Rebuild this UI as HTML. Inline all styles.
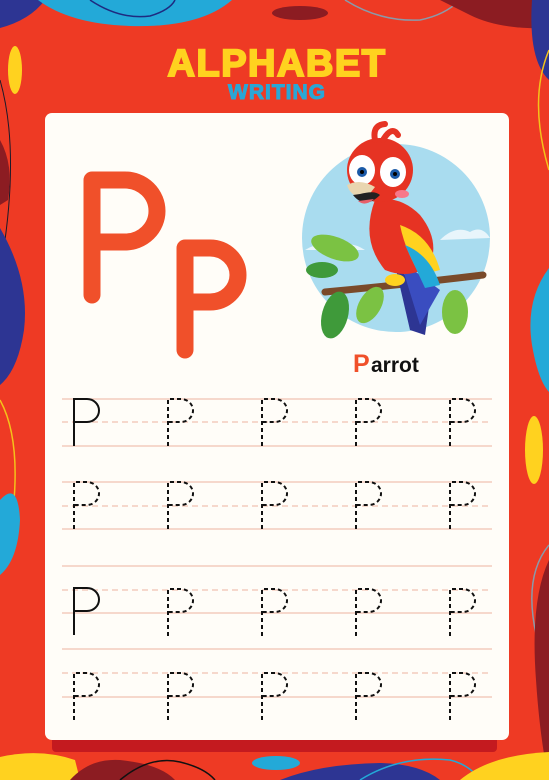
<!DOCTYPE html>
<html><head><meta charset="utf-8"><style>
html,body{margin:0;padding:0;}
body{width:549px;height:780px;overflow:hidden;background:#ee3a24;position:relative;font-family:"Liberation Sans",sans-serif;}
svg{position:absolute;left:0;top:0;}
</style></head><body>
<svg width="549" height="780" viewBox="0 0 549 780" xmlns="http://www.w3.org/2000/svg">
<rect width="549" height="780" fill="#ee3a24"/>
<path d="M0,0 H45 Q30,20 0,28 Z" fill="#2d3593"/>
<path d="M38,0 H232 Q200,28 130,26 Q70,24 38,0 Z" fill="#23a9d8"/>
<path d="M90,0 Q120,20 150,16 Q170,10 175,0" fill="none" stroke="#1e2a80" stroke-width="1.5"/>
<ellipse cx="300" cy="13" rx="28" ry="7" fill="#8c1c22"/>
<path d="M345,0 Q380,22 420,20 Q445,15 460,0" fill="none" stroke="#8a9aaa" stroke-width="1.5"/>
<path d="M440,0 H549 V28 Q500,30 470,15 Z" fill="#8c1c22"/>
<path d="M532,0 H549 V80 Q528,60 532,0 Z" fill="#2d3593"/>
<path d="M549,50 Q528,100 549,170" fill="none" stroke="#f4c21a" stroke-width="1.5"/>
<path d="M549,268 Q525,300 532,345 Q538,380 549,392 Z" fill="#23a9d8"/>
<ellipse cx="534" cy="450" rx="9" ry="34" fill="#ffd21f"/>
<path d="M549,545 Q520,580 540,650" fill="none" stroke="#8a9aaa" stroke-width="1.5"/>
<path d="M549,560 Q530,600 536,680 Q540,740 549,780 Z" fill="#8c1c22"/>
<ellipse cx="15" cy="70" rx="7" ry="24" fill="#ffd21f"/>
<path d="M0,80 Q20,150 2,260" fill="none" stroke="#1a1a2a" stroke-width="1"/>
<path d="M0,140 Q14,165 8,200 L0,205 Z" fill="#8c1c22"/>
<path d="M0,228 Q30,280 24,330 Q18,370 0,385 Z" fill="#2d3593"/>
<path d="M0,400 Q22,440 12,520 L0,530" fill="none" stroke="#f4c21a" stroke-width="1.5"/>
<path d="M0,500 Q18,480 20,520 Q18,560 0,575 Z" fill="#23a9d8"/>
<path d="M0,757 Q40,748 75,760 L80,780 H0 Z" fill="#ffd21f"/>
<path d="M70,780 Q90,758 120,760 Q160,764 175,780 Z" fill="#8c1c22"/>
<path d="M120,780 Q150,755 180,762 Q205,768 215,780" fill="none" stroke="#111" stroke-width="1.5"/>
<ellipse cx="276" cy="763" rx="24" ry="7" fill="#23a9d8"/>
<path d="M280,780 Q320,764 380,763 Q420,764 440,780 Z" fill="#2d3593"/>
<path d="M360,780 Q400,755 450,760 Q470,765 480,780" fill="none" stroke="#23a9d8" stroke-width="1.5"/>
<path d="M460,780 Q490,755 549,752 V780 Z" fill="#ffd21f"/>
<rect x="52" y="720" width="445" height="32" rx="4" fill="#c41a1f"/>
<rect x="45" y="113" width="464" height="627" rx="7" fill="#fffdf8"/>
<text x="277" y="76" text-anchor="middle" font-family="Liberation Sans" font-weight="900" font-size="38" fill="#ffd21f" stroke="#ffd21f" stroke-width="2" letter-spacing="1.5">ALPHABET</text>
<text x="277" y="99" text-anchor="middle" font-family="Liberation Sans" font-weight="900" font-size="21" fill="#29a7d6" stroke="#29a7d6" stroke-width="1" letter-spacing="1">WRITING</text>
<path d="M92,295 V180 H125 A32,31 0 0 1 125,242 H92" fill="none" stroke="#f0502a" stroke-width="17" stroke-linecap="round" stroke-linejoin="round"/>
<path d="M185,350 V248 H210 A28,27 0 0 1 210,302 H185" fill="none" stroke="#f0502a" stroke-width="17" stroke-linecap="round" stroke-linejoin="round"/>
<circle cx="396" cy="238" r="94" fill="#a9dcef"/>
<path d="M305,250 Q320,240 340,248 Q350,240 365,250 Z" fill="#e8f5fb"/>
<path d="M440,240 Q455,225 470,232 Q482,225 490,238 Z" fill="#e8f5fb"/>
<path d="M325,292 Q400,285 483,275" fill="none" stroke="#7a4a2a" stroke-width="7" stroke-linecap="round"/>
<ellipse cx="335" cy="248" rx="25" ry="11" fill="#7bc243" transform="rotate(20 335 248)"/>
<ellipse cx="322" cy="270" rx="16" ry="8" fill="#3f9a3a"/>
<ellipse cx="335" cy="315" rx="13" ry="24" fill="#3f9a3a" transform="rotate(15 335 315)"/>
<ellipse cx="370" cy="305" rx="11" ry="20" fill="#7bc243" transform="rotate(30 370 305)"/>
<ellipse cx="455" cy="312" rx="13" ry="22" fill="#7bc243"/>
<path d="M395,265 L410,330 L425,335 L430,300 Z" fill="#2d3593"/>
<path d="M400,260 L420,325 L440,290 Z" fill="#3a4dc0"/>
<path d="M375,200 Q360,240 385,270 Q410,280 430,265 Q440,240 420,215 Q400,195 375,200 Z" fill="#e63323"/>
<path d="M400,225 Q430,235 440,270 L420,275 Q405,250 400,225 Z" fill="#ffd21f"/>
<path d="M405,245 Q430,255 440,285 L425,288 Z" fill="#23a9d8"/>
<ellipse cx="395" cy="280" rx="10" ry="6" fill="#ffd21f"/>
<ellipse cx="380" cy="170" rx="33" ry="32" fill="#e63323"/>
<path d="M375,140 Q372,125 385,124 M383,140 Q392,125 398,135" stroke="#e63323" stroke-width="6" fill="none" stroke-linecap="round"/>
<ellipse cx="362" cy="170" rx="13" ry="15" fill="#fff"/>
<ellipse cx="393" cy="172" rx="13" ry="15" fill="#fff"/>
<circle cx="362" cy="172" r="5" fill="#1b5aa8"/><circle cx="362" cy="172" r="2" fill="#000"/>
<circle cx="395" cy="174" r="5" fill="#1b5aa8"/><circle cx="395" cy="174" r="2" fill="#000"/>
<path d="M347,185 Q360,178 375,187 L368,196 Q352,200 347,185 Z" fill="#e9d6b0"/>
<path d="M353,195 Q365,210 380,195 Q375,190 360,194 Z" fill="#222"/>
<path d="M358,201 Q365,207 374,199" fill="#e8606a"/>
<ellipse cx="402" cy="194" rx="7" ry="4" fill="#f7788a"/>
<text x="353" y="372" font-family="Liberation Sans" font-weight="bold" font-size="25" fill="#f0502a">P</text>
<text x="371" y="372" font-family="Liberation Sans" font-weight="bold" font-size="21" fill="#111">arrot</text>
<g stroke="#f1c2b2" stroke-width="1.2">
<line x1="62" y1="399" x2="492" y2="399"/><line x1="62" y1="446" x2="492" y2="446"/>
<line x1="62" y1="482" x2="492" y2="482"/><line x1="62" y1="529" x2="492" y2="529"/>
<line x1="62" y1="566" x2="492" y2="566"/><line x1="62" y1="613" x2="492" y2="613"/>
<line x1="62" y1="649" x2="492" y2="649"/><line x1="62" y1="697" x2="492" y2="697"/>
</g>
<g stroke="#f1c2b2" stroke-width="1.2" stroke-dasharray="6,4">
<line x1="62" y1="422" x2="492" y2="422"/><line x1="62" y1="506" x2="492" y2="506"/>
<line x1="62" y1="590" x2="492" y2="590"/><line x1="62" y1="673" x2="492" y2="673"/>
</g>
<defs><path id="L" d="M0,47 V0 H13 A12,11.5 0 0 1 13,23 H0"/></defs>
<g fill="none" stroke="#111" stroke-width="2">
<use href="#L" x="74" y="399"/><use href="#L" x="74" y="588"/>
</g>
<g fill="none" stroke="#111" stroke-width="2" stroke-dasharray="4,3">
<use href="#L" x="168" y="399"/><use href="#L" x="262" y="399"/><use href="#L" x="356" y="399"/><use href="#L" x="450" y="399"/>
<use href="#L" x="74" y="482"/><use href="#L" x="168" y="482"/><use href="#L" x="262" y="482"/><use href="#L" x="356" y="482"/><use href="#L" x="450" y="482"/>
<use href="#L" x="168" y="589"/><use href="#L" x="262" y="589"/><use href="#L" x="356" y="589"/><use href="#L" x="450" y="589"/>
<use href="#L" x="74" y="673"/><use href="#L" x="168" y="673"/><use href="#L" x="262" y="673"/><use href="#L" x="356" y="673"/><use href="#L" x="450" y="673"/>
</g>
</svg>
</body></html>
